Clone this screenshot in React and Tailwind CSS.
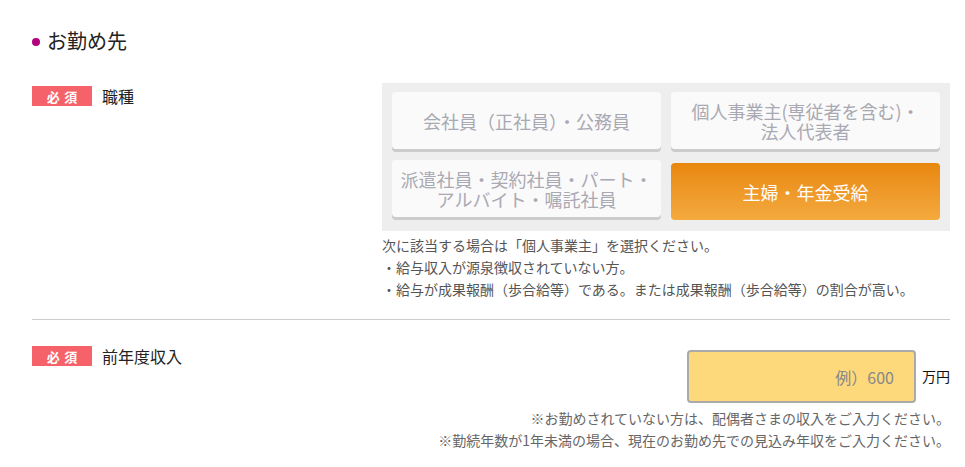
import React from 'react';

const font = { fontFamily: '"Noto Sans CJK JP", "Noto Sans", sans-serif' };

const Badge = () => (
  <span className="inline-flex items-center justify-center w-[60px] h-[20px] bg-[#f5626a] text-white text-[13px] font-bold tracking-[0.35em] pl-[0.35em] leading-none">
    必須
  </span>
);

const jobs = [
  { id: 'company', lines: ['会社員（正社員）・公務員'] },
  { id: 'self', lines: ['個人事業主(専従者を含む)・', '法人代表者'] },
  { id: 'temp', lines: ['派遣社員・契約社員・パート・', 'アルバイト・嘱託社員'] },
  { id: 'house', lines: ['主婦・年金受給'] },
];

const App = () => {
  const [job, setJob] = React.useState('house');
  const [income, setIncome] = React.useState('');

  return (
    <div className="w-[965px] h-[467px] bg-white pl-8 pr-[15px] pt-[27px] text-[#222]" style={font}>
      <div className="flex items-center h-[28px]">
        <span className="w-[8px] h-[8px] rounded-full bg-[#b3007d] mr-[7px] mt-[2px]" />
        <h2 className="text-[20px] leading-[28px]">お勤め先</h2>
      </div>

      <div className="flex mt-[28px]">
        <div className="flex-1 flex items-center self-start mt-[3px]">
          <Badge />
          <span className="ml-[10px] text-[16px] leading-[20px]">職種</span>
        </div>
        <div className="w-[568px]">
          <div className="bg-[#eeeeee] px-[10px] pt-[9px] pb-[14px] grid grid-cols-2 gap-x-[10px] gap-y-[11px]">
            {jobs.map((j) => {
              const on = job === j.id;
              return (
                <button
                  key={j.id}
                  onClick={() => setJob(j.id)}
                  className={
                    on
                      ? 'h-[57px] rounded-[4px] translate-y-[3px] bg-gradient-to-b from-[#e8870a] to-[#f4aa3d] text-white text-[18px] leading-[20px] flex flex-col items-center justify-center'
                      : 'h-[57px] rounded-[4px] bg-[#fafafa] shadow-[0_3px_0_#cccccc] text-[#a9a9b3] text-[18px] leading-[20px] flex flex-col items-center justify-center'
                  }
                >
                  {j.lines.map((l) => (
                    <span key={l} className="whitespace-nowrap">{l}</span>
                  ))}
                </button>
              );
            })}
          </div>
          <div className="mt-[3px] text-[14px] leading-[22px] text-[#555]">
            <p>次に該当する場合は「個人事業主」を選択ください。</p>
            <p>・給与収入が源泉徴収されていない方。</p>
            <p>・給与が成果報酬（歩合給等）である。または成果報酬（歩合給等）の割合が高い。</p>
          </div>
        </div>
      </div>

      <div className="mt-[19px] border-t border-[#cccccc]" />

      <div className="flex mt-[26px]">
        <div className="flex-1 flex items-center self-start">
          <Badge />
          <span className="ml-[10px] text-[16px] leading-[20px]">前年度収入</span>
        </div>
        <div className="flex flex-col items-end">
          <div className="flex items-center mt-[4px]">
            <input
              value={income}
              onChange={(e) => setIncome(e.target.value)}
              placeholder="例）600"
              className="w-[229px] h-[53px] bg-[#fdd97c] border-2 border-[#aaaaaa] rounded-[4px] text-right pr-[20px] text-[16px] text-[#333] placeholder:text-[#888] outline-none"
            />
            <span className="ml-[6px] text-[14px] text-[#111]">万円</span>
          </div>
          <div className="mt-[4px] text-[14px] leading-[22px] text-[#666] text-right">
            <p>※お勤めされていない方は、配偶者さまの収入をご入力ください。</p>
            <p>※勤続年数が1年未満の場合、現在のお勤め先での見込み年収をご入力ください。</p>
          </div>
        </div>
      </div>
    </div>
  );
};

export default App;
